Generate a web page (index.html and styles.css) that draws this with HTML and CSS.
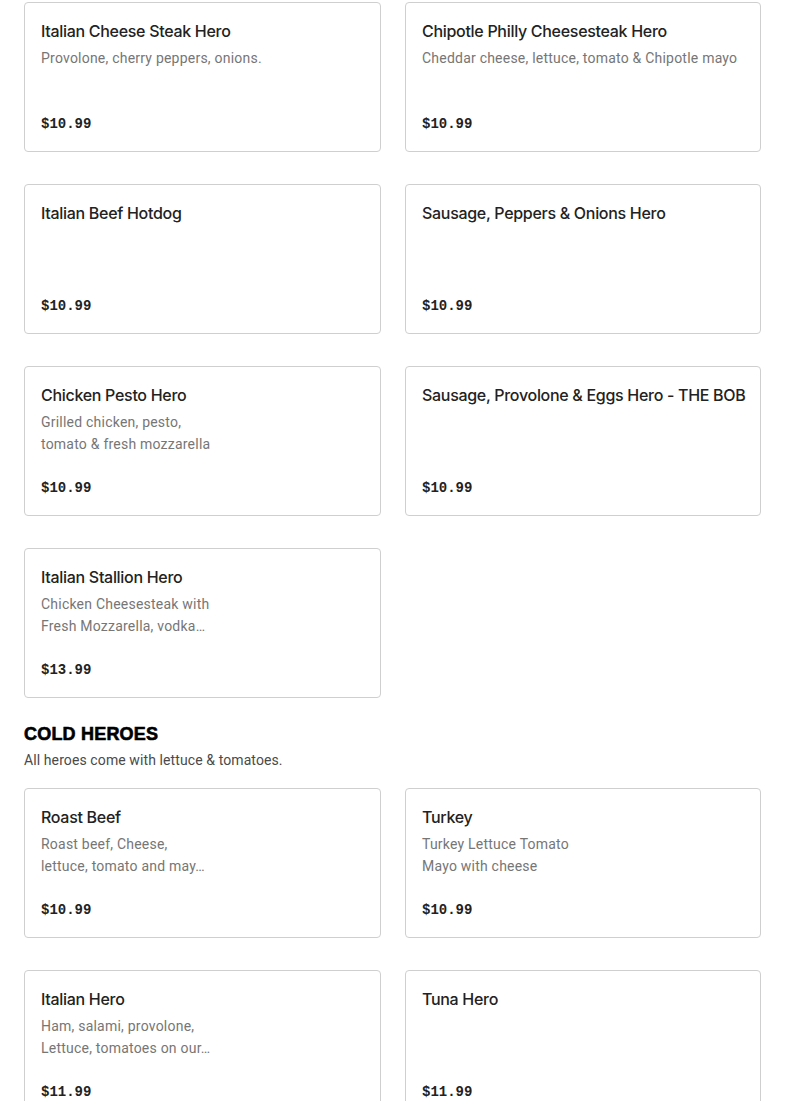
FILE: index.html
```html
<!DOCTYPE html>
<html>
<head>
<meta charset="utf-8">
<link rel="stylesheet" href="styles.css">
</head>
<body>
<main class="menu">
  <section class="grid">
    <div class="card">
      <div class="name">Italian Cheese Steak Hero</div>
      <div class="desc">Provolone, cherry peppers, onions.</div>
      <div class="price">$10.99</div>
    </div>
    <div class="card">
      <div class="name">Chipotle Philly Cheesesteak Hero</div>
      <div class="desc">Cheddar cheese, lettuce, tomato &amp; Chipotle mayo</div>
      <div class="price">$10.99</div>
    </div>
    <div class="card">
      <div class="name">Italian Beef Hotdog</div>
      <div class="price">$10.99</div>
    </div>
    <div class="card">
      <div class="name">Sausage, Peppers &amp; Onions Hero</div>
      <div class="price">$10.99</div>
    </div>
    <div class="card">
      <div class="name">Chicken Pesto Hero</div>
      <div class="desc">Grilled chicken, pesto,<br>tomato &amp; fresh mozzarella</div>
      <div class="price">$10.99</div>
    </div>
    <div class="card">
      <div class="name">Sausage, Provolone &amp; Eggs Hero - THE BOB</div>
      <div class="price">$10.99</div>
    </div>
    <div class="card">
      <div class="name">Italian Stallion Hero</div>
      <div class="desc">Chicken Cheesesteak with<br>Fresh Mozzarella, vodka…</div>
      <div class="price">$13.99</div>
    </div>
  </section>

  <section class="category">
    <h2 class="cat-title">COLD HEROES</h2>
    <p class="cat-note">All heroes come with lettuce &amp; tomatoes.</p>
  </section>

  <section class="grid">
    <div class="card">
      <div class="name">Roast Beef</div>
      <div class="desc">Roast beef, Cheese,<br>lettuce, tomato and may…</div>
      <div class="price">$10.99</div>
    </div>
    <div class="card">
      <div class="name">Turkey</div>
      <div class="desc">Turkey Lettuce Tomato<br>Mayo with cheese</div>
      <div class="price">$10.99</div>
    </div>
    <div class="card">
      <div class="name">Italian Hero</div>
      <div class="desc">Ham, salami, provolone,<br>Lettuce, tomatoes on our…</div>
      <div class="price">$11.99</div>
    </div>
    <div class="card">
      <div class="name">Tuna Hero</div>
      <div class="price">$11.99</div>
    </div>
  </section>
</main>
</body>
</html>
```

FILE: styles.css
```css
html, body {
  margin: 0;
  padding: 0;
  background: #ffffff;
}

body {
  font-family: "Inter", "Liberation Sans", sans-serif;
  color: #222222;
}

.menu {
  padding: 2px 24px 0 24px;
}

.grid {
  display: grid;
  grid-template-columns: 357px 356px;
  column-gap: 24px;
  row-gap: 32px;
}

.card {
  box-sizing: border-box;
  min-height: 150px;
  border: 1px solid #cfcfcf;
  border-radius: 4px;
  padding: 16px;
  display: flex;
  flex-direction: column;
}

.name {
  font-size: 16px;
  font-weight: 500;
  line-height: 24px;
  color: #222222;
  letter-spacing: -0.3px;
  white-space: nowrap;
}

.desc {
  margin-top: 4px;
  font-family: "Roboto", "Liberation Sans", sans-serif;
  font-size: 14px;
  line-height: 22px;
  color: #767676;
  letter-spacing: 0.22px;
}

.price {
  margin-top: auto;
  padding-top: 22px;
  font-family: "Liberation Mono", "DejaVu Sans Mono", monospace;
  font-weight: 700;
  font-size: 14px;
  line-height: 22px;
  color: #222222;
}

.category {
  padding-top: 24px;
  padding-bottom: 17px;
}

.cat-title {
  margin: 0;
  font-family: "Liberation Sans", Arial, sans-serif;
  font-weight: 900;
  font-size: 18px;
  line-height: 24px;
  color: #000000;
  letter-spacing: 0.2px;
  -webkit-text-stroke: 0.6px #000000;
}

.cat-note {
  margin: 3px 0 0 0;
  font-family: "Roboto", "Liberation Sans", sans-serif;
  font-size: 14px;
  line-height: 22px;
  color: #4a4a4a;
  letter-spacing: 0.1px;
}
```
